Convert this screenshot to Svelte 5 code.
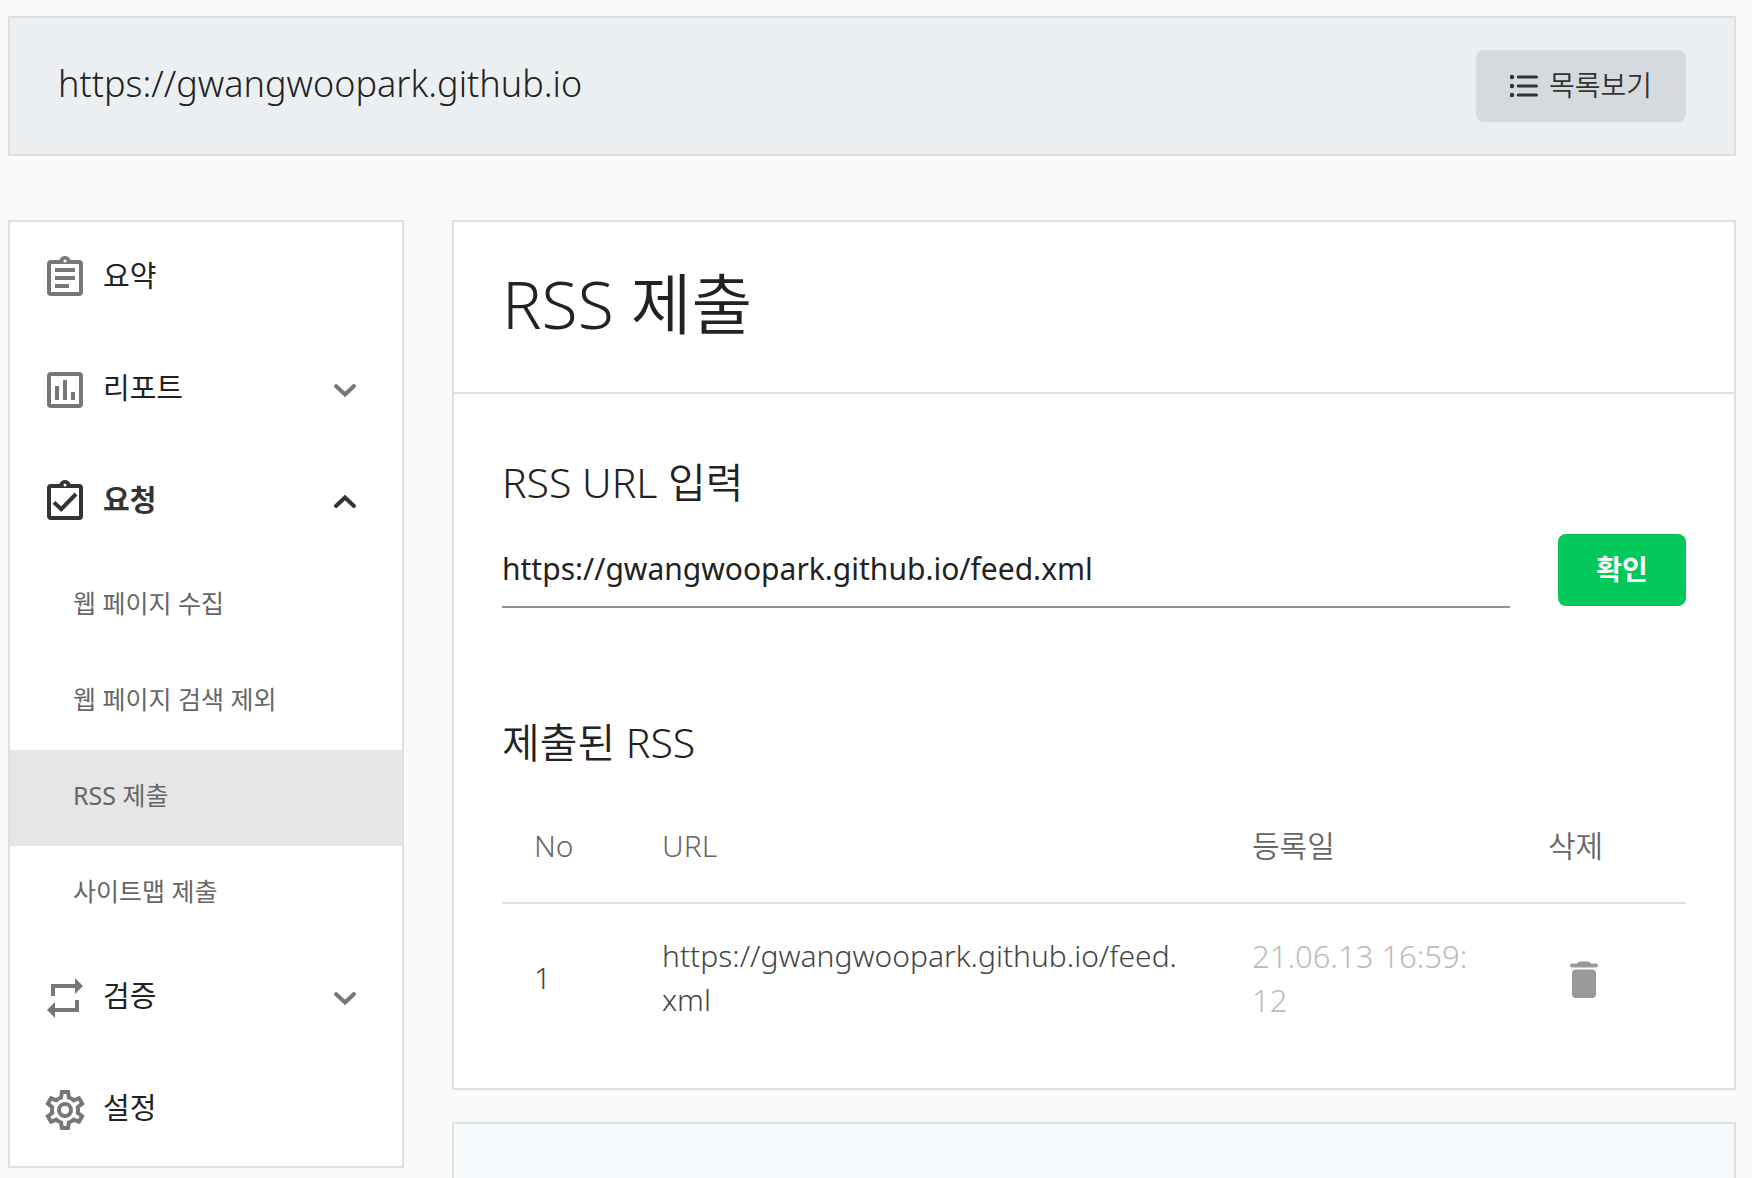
<script>
  let feedUrl = $state('https://gwangwoopark.github.io/feed.xml');
  let reportOpen = $state(false);
  let requestOpen = $state(true);
  let verifyOpen = $state(false);
  let current = $state('RSS 제출');

  const requestItems = ['웹 페이지 수집', '웹 페이지 검색 제외', 'RSS 제출', '사이트맵 제출'];
  const feeds = [
    { no: 1, url: ['https://gwangwoopark.github.io/feed.', 'xml'], date: ['21.06.13 16:59:', '12'] }
  ];
</script>

{#snippet chevron(open)}
  <svg class="chevron" class:open viewBox="0 0 24 24" aria-hidden="true">
    <path d="M3 8L12 16.500L21 8" />
  </svg>
{/snippet}

<div class="page">
  <header class="site">
    <p class="site-url">https://gwangwoopark.github.io</p>
    <button class="list-button" type="button">
      <svg viewBox="0 0 28 24" aria-hidden="true">
        <circle cx="2" cy="3" r="2.200" /><circle cx="2" cy="12" r="2.200" /><circle cx="2" cy="21" r="2.200" />
        <path d="M8.200 3H26.500M8.200 12H26.500M8.200 21H26.500" />
      </svg>
      <span>목록보기</span>
    </button>
  </header>

  <div class="columns">
    <nav class="side">
      <a class="item" href="#summary">
        <svg class="icon" viewBox="0 0 24 24" aria-hidden="true">
          <path d="M7 15h7v2H7zm0-4h10v2H7zm0-4h10v2H7zm12-4h-4.180C14.400 1.840 13.300 1 12 1s-2.400.84-2.820 2H5a2 2 0 0 0-2 2v14a2 2 0 0 0 2 2h14a2 2 0 0 0 2-2V5a2 2 0 0 0-2-2zm-7-.25a.75.75 0 1 1 0 1.500.75.75 0 0 1 0-1.500zM19 19H5V5h14v14z" />
        </svg>
        <span>요약</span>
      </a>
      <button class="item" type="button" aria-expanded={reportOpen} onclick={() => (reportOpen = !reportOpen)}>
        <svg class="icon" viewBox="0 0 24 24" aria-hidden="true">
          <path d="M7 10h2v7H7zm4-3h2v10h-2zm4 6h2v4h-2zM19 3H5a2 2 0 0 0-2 2v14a2 2 0 0 0 2 2h14a2 2 0 0 0 2-2V5a2 2 0 0 0-2-2zm0 16H5V5h14v14z" />
        </svg>
        <span>리포트</span>
        {@render chevron(reportOpen)}
      </button>
      <button class="item active" type="button" aria-expanded={requestOpen} onclick={() => (requestOpen = !requestOpen)}>
        <svg class="icon" viewBox="0 0 24 24" aria-hidden="true">
          <path d="M19 3h-4.180C14.400 1.840 13.300 1 12 1s-2.400.84-2.820 2H5a2 2 0 0 0-2 2v14a2 2 0 0 0 2 2h14a2 2 0 0 0 2-2V5a2 2 0 0 0-2-2zm-7-.25a.75.75 0 1 1 0 1.500.75.75 0 0 1 0-1.500zM19 19H5V5h14v14z" />
          <path class="tick" d="M6.500 12.200L10.100 15.600L17.500 8" />
        </svg>
        <span>요청</span>
        {@render chevron(requestOpen)}
      </button>
      {#if requestOpen}
        <ul class="sub">
          {#each requestItems as name}
            <li>
              <a href="#request" class:selected={name === current} aria-current={name === current ? 'page' : undefined} onclick={() => (current = name)}>{name}</a>
            </li>
          {/each}
        </ul>
      {/if}
      <button class="item" type="button" aria-expanded={verifyOpen} onclick={() => (verifyOpen = !verifyOpen)}>
        <svg class="icon" viewBox="0 0 24 24" aria-hidden="true">
          <path d="M5 5h12V2l4 4-4 4V7H7v4H5zM19 19H7v3l-4-4 4-4v3h10v-4h2z" />
        </svg>
        <span>검증</span>
        {@render chevron(verifyOpen)}
      </button>
      <a class="item" href="#settings">
        <svg class="icon" viewBox="0 0 24 24" aria-hidden="true">
          <path d="M19.430 12.980c.04-.32.07-.64.07-.98 0-.34-.03-.66-.07-.98l2.110-1.650c.19-.15.24-.42.12-.64l-2-3.460c-.09-.16-.26-.25-.44-.25-.06 0-.12.01-.17.03l-2.490 1c-.52-.4-1.080-.73-1.690-.98l-.38-2.650C14.460 2.180 14.250 2 14 2h-4c-.25 0-.46.18-.49.42l-.38 2.650c-.61.25-1.170.59-1.690.98l-2.490-1c-.06-.02-.12-.03-.18-.03-.17 0-.34.09-.43.25l-2 3.460c-.13.22-.07.49.12.64l2.110 1.650c-.04.32-.07.65-.07.98s.03.66.07.98l-2.110 1.650c-.19.15-.24.42-.12.64l2 3.460c.09.16.26.25.44.25.06 0 .12-.01.17-.03l2.490-1c.52.4 1.080.73 1.690.98l.38 2.650c.03.24.24.42.49.42h4c.25 0 .46-.18.49-.42l.38-2.650c.61-.25 1.170-.59 1.690-.98l2.490 1c.06.02.12.03.18.03.17 0 .34-.09.43-.25l2-3.460c.12-.22.07-.49-.12-.64l-2.110-1.650zm-1.980-1.710c.04.31.05.52.05.73s-.02.43-.05.73l-.14 1.130.89.7 1.080.84-.7 1.210-1.270-.51-1.040-.42-.9.68c-.43.32-.84.56-1.250.73l-1.060.43-.16 1.130-.2 1.350h-1.400l-.19-1.350-.16-1.130-1.060-.43c-.43-.18-.83-.41-1.230-.71l-.91-.7-1.060.43-1.270.51-.7-1.210 1.080-.84.89-.7-.14-1.130c-.03-.31-.05-.54-.05-.74s.02-.43.05-.73l.14-1.130-.89-.7-1.080-.84.7-1.210 1.270.51 1.040.42.9-.68c.43-.32.84-.56 1.250-.73l1.060-.43.16-1.130.2-1.350h1.390l.19 1.350.16 1.130 1.060.43c.43.18.83.41 1.230.71l.91.7 1.060-.43 1.270-.51.7 1.210-1.070.85-.89.7.14 1.130zM12 8a4 4 0 1 0 0 8 4 4 0 0 0 0-8zm0 6a2 2 0 1 1 0-4 2 2 0 0 1 0 4z" />
        </svg>
        <span>설정</span>
      </a>
    </nav>

    <main>
      <section class="card">
        <h1>RSS 제출</h1>
        <div class="body">
          <form onsubmit={(e) => e.preventDefault()}>
            <label for="feed-url">RSS URL 입력</label>
            <div class="field">
              <input id="feed-url" type="text" bind:value={feedUrl} />
              <button class="confirm" type="submit">확인</button>
            </div>
          </form>

          <h2>제출된 RSS</h2>
          <table>
            <colgroup>
              <col class="no" /><col /><col class="date-col" /><col class="del" />
            </colgroup>
            <thead>
              <tr><th>No</th><th>URL</th><th>등록일</th><th>삭제</th></tr>
            </thead>
            <tbody>
              {#each feeds as feed}
                <tr>
                  <td>{feed.no}</td>
                  <td>{feed.url[0]}<wbr />{feed.url[1]}</td>
                  <td class="date">{feed.date[0]}<br />{feed.date[1]}</td>
                  <td class="action">
                    <button class="trash" type="button" aria-label="삭제">
                      <svg viewBox="0 0 28 38" aria-hidden="true">
                        <path d="M2 2.500H7L9 .5H19L21 2.500H26A1.900 1.900 0 0 1 26 6.500H2A1.900 1.900 0 0 1 2 2.500ZM6 8.500H22A4 4 0 0 1 26 12.500V33A4 4 0 0 1 22 37H6A4 4 0 0 1 2 33V12.500A4 4 0 0 1 6 8.500Z" />
                      </svg>
                    </button>
                  </td>
                </tr>
              {/each}
            </tbody>
          </table>
        </div>
      </section>
      <section class="card notice" aria-label="안내"></section>
    </main>
  </div>
</div>

<style>
  :global(body) {
    background: #fafafa;
  }
  .page {
    padding: 16px 16px 0 8px;
    font-family: 'Noto Sans', 'Noto Sans CJK KR', sans-serif;
    font-weight: 350;
    color: #222;
  }
  .page * {
    box-sizing: border-box;
  }
  button,
  input {
    font: inherit;
    color: inherit;
    border: 0;
    background: none;
    padding: 0;
    margin: 0;
  }
  button {
    cursor: pointer;
  }
  a {
    color: inherit;
    text-decoration: none;
  }
  .site {
    display: flex;
    align-items: center;
    justify-content: space-between;
    padding: 32px 48px;
    border: 2px solid #dfdfdf;
    background: #ebeff2;
  }
  .site-url {
    margin: 0;
    padding-bottom: 4px;
    font-size: 36px;
    line-height: 48px;
  }
  .list-button {
    display: flex;
    align-items: center;
    justify-content: center;
    gap: 11px;
    width: 210px;
    height: 72px;
    border-radius: 8px;
    background: #d5dade;
    color: #333;
    font-size: 28px;
    line-height: 40px;
  }
  .list-button span {
    padding-bottom: 2px;
  }
  .list-button svg {
    width: 28px;
    height: 24px;
    fill: #333;
    stroke: none;
  }
  .list-button path {
    stroke: #333;
    stroke-width: 3;
    stroke-linecap: round;
  }
  .columns {
    display: grid;
    grid-template-columns: 396px minmax(0, 1fr);
    align-items: start;
    gap: 48px;
    padding-top: 64px;
  }
  .side {
    border: 2px solid #dfdfdf;
    background: #fff;
    font-weight: 400;
  }
  .item {
    display: flex;
    align-items: center;
    width: 100%;
    height: 112px;
    padding: 0 45px 0 31px;
    gap: 14px;
    font-size: 29px;
    line-height: 40px;
    text-align: left;
  }
  .item span {
    padding-bottom: 4px;
  }
  .icon {
    width: 48px;
    height: 48px;
    fill: #777;
  }
  .chevron {
    width: 24px;
    height: 24px;
    margin-left: auto;
    fill: none;
    stroke: #777;
    stroke-width: 4;
    stroke-linecap: round;
  }
  .chevron.open {
    transform: rotate(180deg);
  }
  .active {
    font-weight: 700;
    color: #333;
  }
  .active .icon {
    fill: #333;
  }
  .active .chevron,
  .tick {
    stroke: #333;
  }
  .active .tick {
    fill: none;
    stroke-width: 2;
  }
  .sub {
    margin: 0;
    padding: 0;
    list-style: none;
    font-size: 25px;
    color: #666;
  }
  .sub a {
    display: block;
    padding: 0 63px 6px;
    line-height: 90px;
  }
  .sub .selected {
    background: #e6e6e6;
  }
  .card {
    border: 2px solid #dfdfdf;
    background: #fff;
  }
  h1 {
    margin: 0;
    padding: 31px 48px 39px;
    border-bottom: 2px solid #dfdfdf;
    font-size: 66px;
    line-height: 100px;
    font-weight: 350;
  }
  .body {
    padding: 56px 48px 32px;
  }
  label,
  h2 {
    display: block;
    margin: 0;
    font-size: 41px;
    line-height: 64px;
    font-weight: 350;
  }
  .field {
    display: flex;
    gap: 48px;
    padding-top: 20px;
  }
  input {
    flex: 1;
    min-width: 0;
    height: 74px;
    padding-bottom: 4px;
    border-bottom: 2px solid #929294;
    font-size: 30px;
    font-weight: 400;
    border-radius: 0;
    outline: 0;
  }
  .confirm {
    width: 128px;
    height: 72px;
    padding-bottom: 4px;
    border-radius: 8px;
    background: #03c95b;
    color: #fff;
    font-size: 28px;
    font-weight: 700;
  }
  h2 {
    padding-top: 102px;
  }
  table {
    width: 100%;
    table-layout: fixed;
    border-collapse: collapse;
    margin-top: 16px;
    color: #666;
    font-size: 30px;
    line-height: 44px;
  }
  .no {
    width: 128px;
  }
  .date-col {
    width: 296px;
  }
  .del {
    width: 170px;
  }
  th {
    padding: 34px 32px;
    border-bottom: 2px solid #dfdfdf;
    font-weight: 350;
    text-align: left;
  }
  td {
    padding: 30px 32px 34px;
    color: #444;
  }
  td.date {
    padding-right: 0;
    color: #bbb;
    font-size: 31px;
  }
  td.action {
    padding: 32px;
  }
  .trash {
    display: block;
    margin-left: 22px;
  }
  .trash svg {
    display: block;
    width: 28px;
    height: 38px;
    fill: #999;
  }
  .notice {
    min-height: 160px;
    margin-top: 32px;
    background: #f5fafd;
  }
</style>
